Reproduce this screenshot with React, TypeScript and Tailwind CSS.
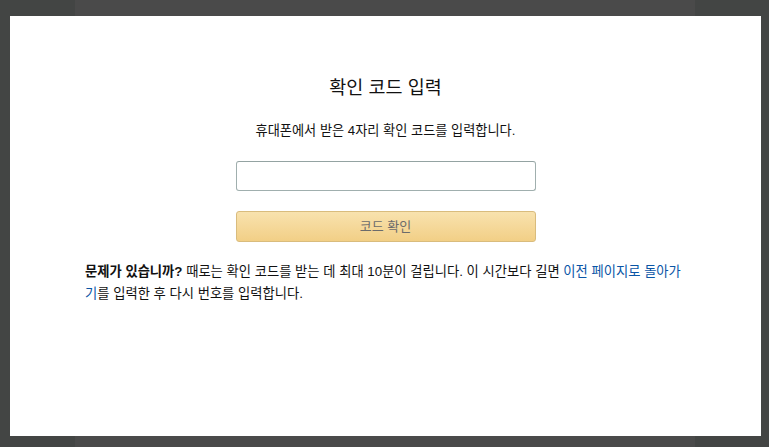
import React from 'react';

const font = { fontFamily: 'Arial, "Liberation Sans", "Noto Sans CJK KR", sans-serif' };

export default function App() {
  return (
    <div className="w-[769px] h-[447px] flex bg-[#4a4a4a] overflow-hidden" style={font}>
      <div className="w-[75px] bg-[#434544] shrink-0" />
      <div className="flex-1" />
      <div className="w-[74px] bg-[#434544] shrink-0" />
      <div className="fixed left-[10px] top-[16px] w-[751px] h-[420px] bg-white flex flex-col items-center text-[#111]">
        <h1 className="mt-[58px] text-[18.5px] leading-[28px] font-normal">확인 코드 입력</h1>
        <p className="mt-[19px] text-[13.2px] leading-[19px]">휴대폰에서 받은 4자리 확인 코드를 입력합니다.</p>
        <input
          type="text"
          className="mt-[21px] w-[300px] h-[30px] border border-[#a0afae] border-t-[#94a3a2] rounded-[3px] outline-none px-2 text-[13px]"
        />
        <button className="mt-[20px] w-[300px] h-[31px] rounded-[3px] border border-[#d9bc7d] bg-gradient-to-b from-[#f8e2ae] to-[#f2cf86] text-[13px] text-[#6b6b6b]">
          코드 확인
        </button>
        <p className="mt-[19px] self-stretch px-[75px] text-[13.3px] leading-[22px]">
          <span className="font-bold">문제가 있습니까?</span> 때로는 확인 코드를 받는 데 최대 10분이 걸립니다. 이 시간보다 길면{' '}
          <a className="text-[#0a55a6]">이전 페이지로 돌아가기</a>를 입력한 후 다시 번호를 입력합니다.
        </p>
      </div>
    </div>
  );
}
